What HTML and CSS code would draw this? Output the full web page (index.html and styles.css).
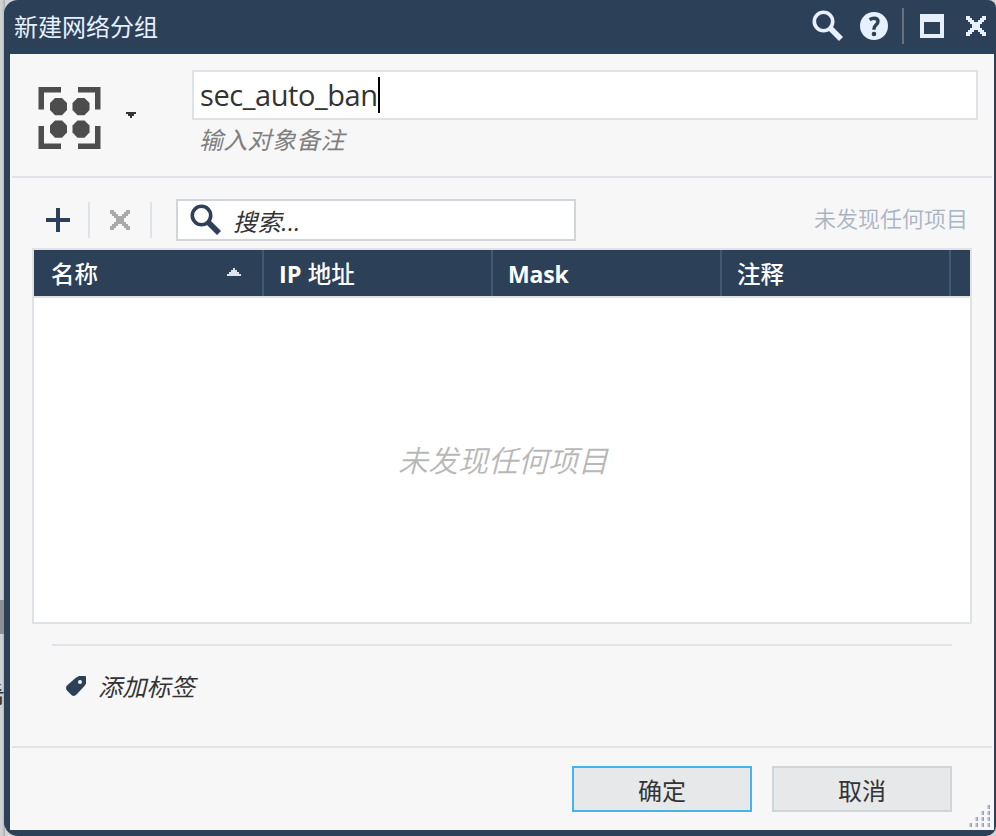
FILE: index.html
```html
<!DOCTYPE html>
<html lang="zh-CN">
<head>
<meta charset="utf-8">
<title>新建网络分组</title>
<link rel="stylesheet" href="styles.css">
</head>
<body>
<div class="backdrop" aria-hidden="true"><div class="scrap"></div><span class="behind">希</span></div>
<div class="window">
  <header class="titlebar">
    <h1>新建网络分组</h1>
    <svg class="t-search" width="32" height="32" viewBox="0 0 32 32"><circle cx="11.5" cy="11.5" r="9.2" fill="none" stroke="#e6f0fe" stroke-width="3.6"/><path d="M18 18L29 29" stroke="#e6f0fe" stroke-width="5.6"/></svg>
    <svg class="t-help" width="28" height="28" viewBox="0 0 28 28"><circle cx="14" cy="14" r="14" fill="#e6f0fe"/><path d="M9.6 7.7Q11.8 6.3 14 6.3C16.5 6.3 18 7.6 18 9.6C18 12.7 14 13.1 14 16.8V17.8" fill="none" stroke="#2c4058" stroke-width="3.4"/><circle cx="14" cy="22" r="2.3" fill="#2c4058"/></svg>
    <i class="t-sep"></i>
    <svg class="t-max" width="24" height="24" shape-rendering="crispEdges"><path d="M0 0H24V24H0ZM4 8V20H20V8Z" fill="#e6f0fe" fill-rule="evenodd"/></svg>
    <svg class="t-close" width="20" height="20" viewBox="0 0 20 20" shape-rendering="crispEdges"><path d="M0 0H4V2H6V4H8V6H12V4H14V2H16V0H20V4H18V6H16V8H14V12H16V14H18V16H20V20H16V18H14V16H12V14H8V16H6V18H4V20H0V16H2V14H4V12H6V8H4V6H2V4H0Z" fill="#e6f0fe"/></svg>
  </header>
  <main class="content">
    <section class="identity">
      <svg class="group-icon" width="63" height="62" viewBox="0 0 63 62" fill="#4d4d4d"><path d="M.5 0H23V5.5H6V22.500H.5ZM40 0H62.500V22.500H57V5.500H40ZM.500 39H6V56.500H23V62H.500ZM57 39H62.500V62H40V56.500H57Z"/><path id="dot" d="M17 11H24L29 16V23L24 28.300H17L12 23V16Z"/><use href="#dot" x="22.500"/><use href="#dot" y="22.500"/><use href="#dot" x="22.500" y="22.500"/></svg>
      <svg class="caret" width="10" height="6" shape-rendering="crispEdges"><path d="M0 0H10V2H8V4H6V6H4V4H2V2H0Z" fill="#333"/></svg>
      <div class="fields">
        <div class="name"><span>sec_auto_ban</span><i></i></div>
        <div class="hint">输入对象备注</div>
      </div>
    </section>
    <section class="members">
      <div class="toolbar">
        <svg class="add" width="24" height="24" shape-rendering="crispEdges"><path d="M10 0H14V10H24V14H14V24H10V14H0V10H10Z" fill="#2c4058"/></svg>
        <i class="sep"></i>
        <svg class="remove" width="20" height="20" shape-rendering="crispEdges"><path d="M0 0H4V2H6V4H8V6H12V4H14V2H16V0H20V4H18V6H16V8H14V12H16V14H18V16H20V20H16V18H14V16H12V14H8V16H6V18H4V20H0V16H2V14H4V12H6V8H4V6H2V4H0Z" fill="#a7a9ab"/></svg>
        <i class="sep"></i>
        <div class="search"><svg width="32" height="32" viewBox="0 0 32 32"><circle cx="11.500" cy="11.500" r="9.200" fill="none" stroke="#2c4058" stroke-width="3.600"/><path d="M18 18L29 29" stroke="#2c4058" stroke-width="5.600"/></svg><span>搜索...</span></div>
        <div class="count">未发现任何项目</div>
      </div>
      <div class="table">
        <div class="thead">
          <div><span class="cjk">名称</span><svg width="14" height="8" shape-rendering="crispEdges"><path d="M6 0H8V2H10V4H12V6H14V8H0V6H2V4H4V2H6Z" fill="#dfe4ec"/></svg></div>
          <div><span>IP <span class="cjk">地址</span></span></div>
          <div><span class="latin">Mask</span></div>
          <div><span class="cjk">注释</span></div>
          <div></div>
        </div>
        <div class="empty">未发现任何项目</div>
      </div>
    </section>
    <section class="tags">
      <svg width="20" height="20" viewBox="0 0 20 20"><path d="M13 0H19Q20 0 20 1V7.500L18.500 10L10.500 18.500Q8 21 5.500 19L1 14.500Q-1 12 1 9.500L9.500 2Z" fill="#2c4058"/><circle cx="14" cy="6" r="2" fill="#f7f7f7"/></svg>
      <span>添加标签</span>
    </section>
    <footer class="actions">
      <div class="btn primary">确定</div>
      <div class="btn">取消</div>
    </footer>
    <svg class="grip" width="22" height="23"><defs><linearGradient id="g"><stop offset="0" stop-color="#dfe4ec"/><stop offset="1" stop-color="#8593aa"/></linearGradient></defs><g fill="url(#g)"><path id="p" d="M18 1H21V5H18Z"/><use href="#p" y="6"/><use href="#p" y="12"/><use href="#p" y="18"/><use href="#p" x="-6" y="6"/><use href="#p" x="-6" y="12"/><use href="#p" x="-6" y="18"/><use href="#p" x="-12" y="12"/><use href="#p" x="-12" y="18"/><use href="#p" x="-18" y="18"/></g></svg>
  </main>
</div>
</body>
</html>
```
FILE: styles.css
```css
* { box-sizing: border-box; }
html, body { margin: 0; height: 836px; overflow: hidden; }
body {
  position: relative;
  background: #d2d3d4;
  font: 24px/36px "Open Sans", "Noto Sans CJK SC", sans-serif;
  color: #333;
}
svg { display: block; flex: none; }
.backdrop { position: absolute; left: 0; top: 0; width: 5px; height: 836px; overflow: hidden; background: linear-gradient(90deg, #d0d1d2 0 2px, #a8abae 5px); }
.scrap { margin-top: 600px; height: 34px; background: #8c8f93; }
.behind { position: absolute; left: -19px; top: 677px; }
.window {
  position: relative;
  margin-left: 4px;
  height: 836px;
  padding: 0 2px 6px 6px;
  display: flex;
  flex-direction: column;
  background: #2c4058;
  border-radius: 14px 8px 10px 14px;
}
.titlebar { height: 54px; flex: none; display: flex; align-items: center; padding: 0 8px 0 4px; }
.titlebar h1 { margin: 0 auto 0 0; font-size: 24px; font-weight: 400; color: #e6f0fe; }
.t-search { margin-right: 16px; margin-top: -3px; }
.t-help { margin-right: 14px; margin-top: -2px; }
.t-sep { width: 2px; height: 36px; background: #65717d; margin: -2px 16px 0 0; }
.t-max { margin-right: 22px; margin-top: -2px; }
.t-close { margin-top: -2px; }
.content { position: relative; flex: 1; background: #f7f7f7; display: flex; flex-direction: column; }
.identity { height: 124px; flex: none; margin: 0 2px; padding: 16px 14px 0 26px; display: flex; border-bottom: 2px solid #dfe3e7; }
.group-icon { margin-top: 17px; }
.caret { margin: 42px 0 0 25px; }
.fields { flex: 1; margin-left: 56px; }
.name { height: 50px; padding: 0 6px; display: flex; align-items: center; background: #fff; border: 2px solid #dfe3e8; font-size: 29px; letter-spacing: -0.42px; }
.name i { width: 2px; height: 36px; background: #000; }
.hint { padding-left: 7px; margin-top: 2px; font-style: italic; color: #808080; letter-spacing: .3px; }
.members { height: 446px; flex: none; padding: 21px 22px 0; }
.toolbar { height: 42px; display: flex; align-items: center; padding-left: 14px; }
.sep { width: 2px; height: 36px; background: #dfe3e7; }
.add { margin-right: 18px; }
.remove { margin: 0 20px; }
.search { width: 400px; height: 42px; margin-left: 24px; padding-left: 12px; display: flex; align-items: center; background: #fff; border: 2px solid #d0d5da; font-style: italic; letter-spacing: .3px; }
.search span { margin: 3px 0 0 11px; }
.count { margin: -4px 4px 0 auto; font-size: 22px; font-weight: 350; color: #a9b4c3; }
.table { height: 376px; margin-top: 7px; border: 2px solid #dfe3e8; background: #fff; display: flex; flex-direction: column; }
.thead { height: 48px; flex: none; display: grid; grid-template-columns: 230px 229px 229px 229px 1fr; background: #2c4058; border-bottom: 2px solid #dfe3e8; color: #fff; font-size: 23.500px; font-weight: 700; }
.thead div { display: flex; align-items: center; justify-content: space-between; padding: 2px 21px 0 15px; border-right: 2px solid #405873; }
.thead div:first-child { padding-left: 17px; }
.thead div:last-child { border: 0; padding: 0; }
.thead svg { margin-top: -4px; }
.cjk { font-weight: 500; }
.latin { font-size: 23px; letter-spacing: -.2px; }
.empty { flex: 1; display: flex; align-items: center; justify-content: center; font-size: 30px; font-weight: 350; font-style: italic; color: #b8b8b8; padding: 2px 0 0 2px; }
.tags { width: 900px; height: 102px; margin: 20px 42px 0; padding: 22px 0 0 14px; border-top: 2px solid #dfe3e7; display: flex; align-items: flex-start; font-style: italic; letter-spacing: .3px; }
.tags svg { margin: 8px 12px 0 0; }
.tags span { margin-top: 1px; }
.actions { flex: 1; margin: 0 2px; padding: 18px 40px 0 0; border-top: 2px solid #dfe3e7; display: flex; justify-content: flex-end; gap: 20px; }
.btn { width: 180px; height: 46px; border: 2px solid #d0d5da; background: #e6e8ea; display: flex; align-items: center; justify-content: center; padding-top: 3px; }
.primary { border-color: #45b4ec; }
.grip { position: absolute; right: 3px; bottom: 3px; }
```
